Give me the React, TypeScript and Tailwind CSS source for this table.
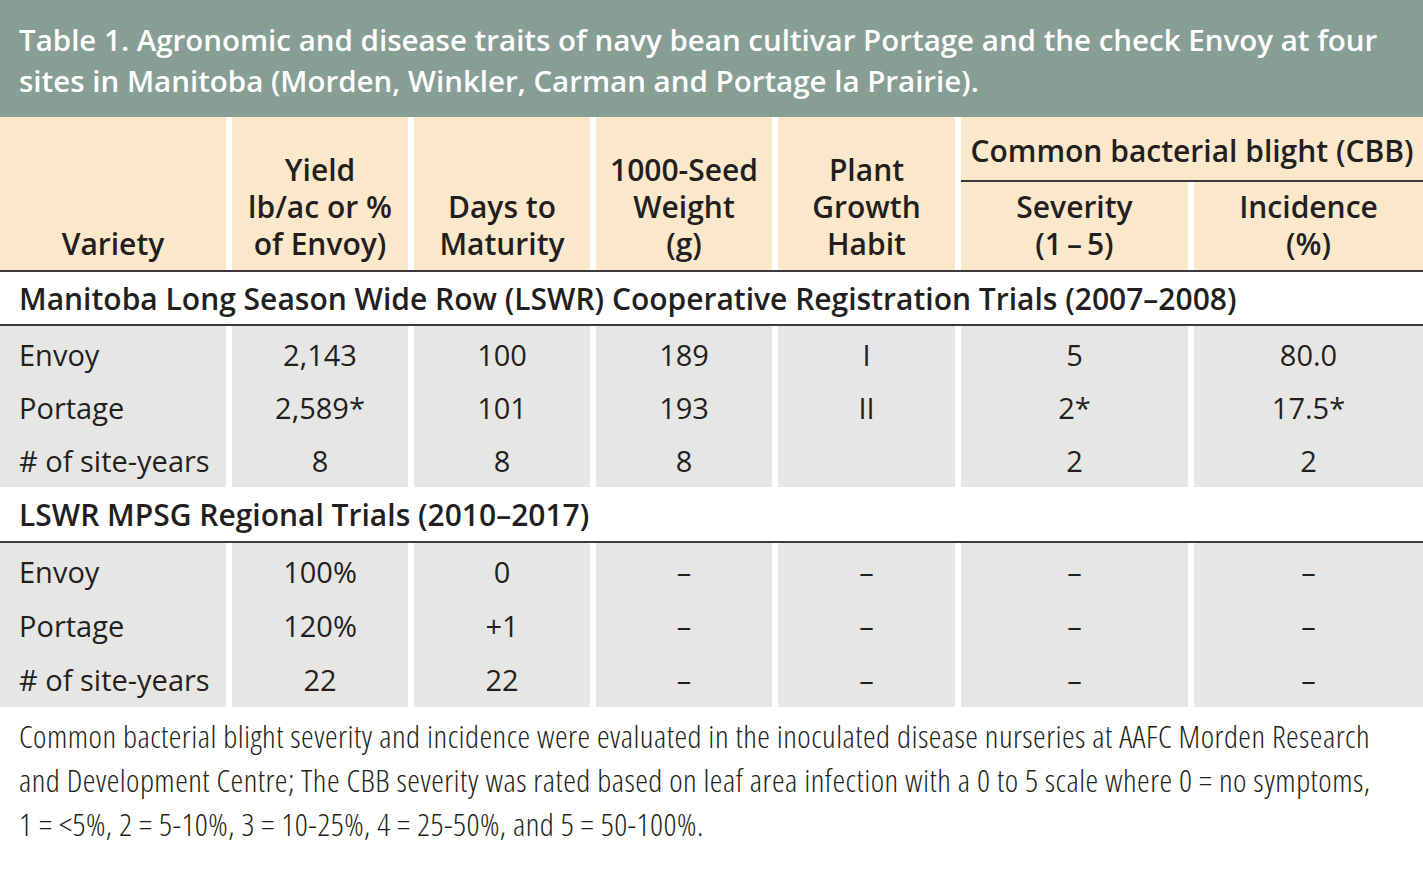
import React from "react";

const cols = "grid grid-cols-[226px_176px_176px_176px_177px_227px_1fr] gap-x-[6px]";

type Row = { name: string; vals: string[] };

const lswr: Row[] = [
  { name: "Envoy", vals: ["2,143", "100", "189", "I", "5", "80.0"] },
  { name: "Portage", vals: ["2,589*", "101", "193", "II", "2*", "17.5*"] },
  { name: "# of site-years", vals: ["8", "8", "8", "", "2", "2"] },
];

const mpsg: Row[] = [
  { name: "Envoy", vals: ["100%", "0", "–", "–", "–", "–"] },
  { name: "Portage", vals: ["120%", "+1", "–", "–", "–", "–"] },
  { name: "# of site-years", vals: ["22", "22", "–", "–", "–", "–"] },
];

function HeadCell({ children, className = "" }: { children: React.ReactNode; className?: string }) {
  return (
    <div
      className={`row-span-2 flex items-end justify-center bg-[#fbe8cb] pb-[8px] text-center leading-[37px] ${className}`}
    >
      <div>{children}</div>
    </div>
  );
}

function DataBlock({ rows, rowH }: { rows: Row[]; rowH: string }) {
  return (
    <div className={`${cols} border-t-2 border-[#3b3b3b]`}>
      <div className={`bg-[#e6e7e5] pt-[2px] pl-[19px]`}>
        {rows.map((r) => (
          <div key={r.name} className={`${rowH} flex items-center whitespace-nowrap`}>
            {r.name}
          </div>
        ))}
      </div>
      {[0, 1, 2, 3, 4, 5].map((c) => (
        <div key={c} className="bg-[#e6e7e5] pt-[2px]">
          {rows.map((r) => (
            <div key={r.name} className={`${rowH} flex items-center justify-center`}>
              {r.vals[c]}
            </div>
          ))}
        </div>
      ))}
    </div>
  );
}

export default function App() {
  return (
    <div className="w-[1423px] h-[879px] bg-white text-[#231f20] font-['Open_Sans',sans-serif] overflow-hidden">
      <div className="h-[117px] bg-[#879e95] px-[19px] pt-[19px] text-[29.5px] font-semibold leading-[41px] text-white whitespace-nowrap">
        Table 1. Agronomic and disease traits of navy bean cultivar Portage and the check Envoy at four
        <br />
        sites in Manitoba (Morden, Winkler, Carman and Portage la Prairie).
      </div>

      <div className={`${cols} grid-rows-[65px_88px] text-[30px] font-semibold`}>
        <HeadCell>Variety</HeadCell>
        <HeadCell>
          Yield
          <br />
          lb/ac or %
          <br />
          of Envoy)
        </HeadCell>
        <HeadCell>
          Days to
          <br />
          Maturity
        </HeadCell>
        <HeadCell>
          1000-Seed
          <br />
          Weight
          <br />
          (g)
        </HeadCell>
        <HeadCell>
          Plant
          <br />
          Growth
          <br />
          Habit
        </HeadCell>
        <div className="col-span-2 flex items-center justify-center border-b-2 border-[#3b3b3b] bg-[#fbe8cb] pt-[4px] whitespace-nowrap">
          Common bacterial blight (CBB)
        </div>
        <div className="flex items-end justify-center bg-[#fbe8cb] pb-[8px] text-center leading-[37px]">
          <div>
            Severity
            <br />
            (1{"\u2009"}–{"\u2009"}5)
          </div>
        </div>
        <div className="flex items-end justify-center bg-[#fbe8cb] pb-[8px] text-center leading-[37px]">
          <div>
            Incidence
            <br />
            (%)
          </div>
        </div>
      </div>

      <div className="flex h-[54px] items-center border-t-2 border-[#3b3b3b] pl-[19px] text-[30px] font-semibold whitespace-nowrap">
        Manitoba Long Season Wide Row (LSWR) Cooperative Registration Trials (2007–2008)
      </div>
      <div className="text-[29px]">
        <DataBlock rows={lswr} rowH="h-[53px]" />
      </div>

      <div className="flex h-[54px] items-center pl-[19px] text-[30px] font-semibold whitespace-nowrap">
        LSWR MPSG Regional Trials (2010–2017)
      </div>
      <div className="text-[29px]">
        <DataBlock rows={mpsg} rowH="h-[54px]" />
      </div>

      <div className="px-[19px] pt-[7px] text-[32px] font-light leading-[44px] tracking-[0.45px] [font-stretch:75%] whitespace-nowrap text-[#231f20]">
        Common bacterial blight severity and incidence were evaluated in the inoculated disease nurseries at AAFC Morden Research
        <br />
        and Development Centre; The CBB severity was rated based on leaf area infection with a 0 to 5 scale where 0 = no symptoms,
        <br />
        1 = &lt;5%, 2 = 5-10%, 3 = 10-25%, 4 = 25-50%, and 5 = 50-100%.
      </div>
    </div>
  );
}
